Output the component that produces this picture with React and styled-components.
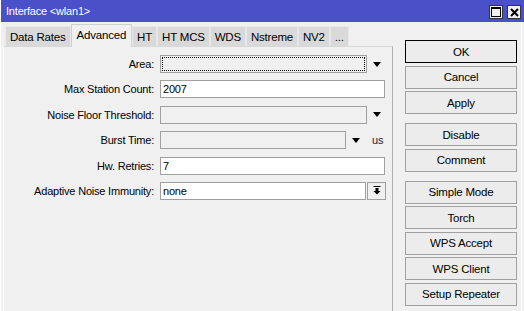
import React from 'react';
import styled, { createGlobalStyle } from 'styled-components';

const GlobalStyle = createGlobalStyle`
	html, body {
		margin: 0;
		padding: 0;
		background: #f0f0f0;
	}
	body {
		font-family: 'Liberation Sans', Arial, sans-serif;
		font-size: 11px;
		letter-spacing: -0.2px;
		color: #000;
	}
`;

const Window = styled.div`
	width: 524px;
	height: 311px;
	overflow: hidden;
	display: flex;
	flex-direction: column;
	background: #f0f0f0;
	box-sizing: border-box;
	border-left: 1px solid #fff;
`;

const TitleBar = styled.div`
	height: 22px;
	flex: none;
	background: #4a50c8;
	color: #fff;
	display: flex;
	align-items: center;
	justify-content: space-between;
	padding: 0 3px 0 5px;
	font-size: 11px;
`;

const TitleButtons = styled.div`
	display: flex;
	gap: 4px;
	padding-top: 2px;
`;

const TitleButton = styled.div`
	width: 14px;
	height: 14px;
	box-sizing: border-box;
	border: 1px solid #333;
	background: #f0f0f0;
	display: grid;
	place-items: center;
`;

const Body = styled.div`
	flex: 1;
	display: flex;
	border-right: 1px solid #fff;
	margin-right: 2px;
`;

const Main = styled.div`
	width: 390px;
	padding-left: 2px;
	display: flex;
	flex-direction: column;
`;

const Tabs = styled.div`
	height: 24px;
	display: flex;
	align-items: flex-end;
	padding-left: 2px;
`;

const Tab = styled.div`
	height: ${(p) => (p.active ? '23px' : '20px')};
	box-sizing: border-box;
	padding: 0 ${(p) => (p.active ? '5px' : '4px')};
	display: flex;
	align-items: center;
	background: ${(p) => (p.active ? '#f0f0f0' : '#d9d9d9')};
	border: 1px solid ${(p) => (p.active ? '#d0d0d0' : '#e8e8e8')};
	border-bottom: none;
	margin-bottom: ${(p) => (p.active ? '-1px' : '0')};
	position: relative;
	z-index: ${(p) => (p.active ? 1 : 0)};
	font-size: 11.5px;
	padding-bottom: ${(p) => (p.active ? '3px' : '0')};
`;

const Panel = styled.div`
	flex: 1;
	border-top: 1px solid #d8d8d8;
	border-left: 1px solid #fff;
	border-right: 1px solid #b0b0b0;
	padding-top: 8px;
	display: grid;
	grid-template-columns: 150px 1fr;
	grid-auto-rows: 18px;
	row-gap: 7.4px;
	column-gap: 6px;
	align-content: start;
`;

const Label = styled.div`
	text-align: right;
	line-height: 18px;
	white-space: nowrap;
`;

const Field = styled.div`
	display: flex;
	align-items: center;
`;

const Input = styled.div`
	width: ${(p) => p.w}px;
	height: 18px;
	box-sizing: border-box;
	border: 1px solid #a0a0a0;
	background: ${(p) => (p.disabled ? '#f0f0f0' : '#fff')};
	padding-left: 2px;
	line-height: 16px;
	outline: ${(p) => (p.focused ? '1px dotted #000' : 'none')};
	outline-offset: -3px;
`;

const Arrow = styled.div`
	width: 0;
	height: 0;
	border-left: 4px solid transparent;
	border-right: 4px solid transparent;
	border-top: 5px solid #000;
	margin-left: ${(p) => p.gap || 6}px;
`;

const Unit = styled.span`
	margin-left: 12px;
	color: #202040;
`;

const DropButton = styled.div`
	width: 19px;
	height: 18px;
	box-sizing: border-box;
	border: 1px solid #a0a0a0;
	background: #f0f0f0;
	margin-left: 1px;
	display: grid;
	place-items: center;
`;

const Side = styled.div`
	flex: 1;
	display: flex;
	flex-direction: column;
	padding: 18px 0 0 12px;
`;

const Group = styled.div`
	display: flex;
	flex-direction: column;
	gap: 2.5px;
	margin-bottom: 9px;
`;

const Button = styled.div`
	width: 112px;
	height: 23px;
	box-sizing: border-box;
	border: 1px solid ${(p) => (p.primary ? '#000' : '#a0a0a0')};
	background: #ececec;
	display: grid;
	place-items: center;
	font-size: 11.5px;
`;

const tabs = ['Data Rates', 'Advanced', 'HT', 'HT MCS', 'WDS', 'Nstreme', 'NV2', '...'];

const groups = [
	['OK', 'Cancel', 'Apply'],
	['Disable', 'Comment'],
	['Simple Mode', 'Torch', 'WPS Accept', 'WPS Client', 'Setup Repeater'],
];

const App = () => {
	return (
		<>
			<GlobalStyle />
			<Window>
				<TitleBar>
					<span>Interface &lt;wlan1&gt;</span>
					<TitleButtons>
						<TitleButton>
							<svg width="10" height="10" viewBox="0 0 10 10">
								<rect x="0.5" y="0.5" width="9" height="9" fill="none" stroke="#000" />
								<rect x="0" y="0" width="10" height="2" fill="#000" />
							</svg>
						</TitleButton>
						<TitleButton>
							<svg width="9" height="9" viewBox="0 0 9 9">
								<path d="M1 1 L8 8 M8 1 L1 8" stroke="#000" strokeWidth="2" />
							</svg>
						</TitleButton>
					</TitleButtons>
				</TitleBar>
				<Body>
					<Main>
						<Tabs>
							{tabs.map((t) => (
								<Tab key={t} active={t === 'Advanced'}>
									{t}
								</Tab>
							))}
						</Tabs>
						<Panel>
							<Label>Area:</Label>
							<Field>
								<Input w={207} disabled focused />
								<Arrow />
							</Field>

							<Label>Max Station Count:</Label>
							<Field>
								<Input w={225}>2007</Input>
							</Field>

							<Label>Noise Floor Threshold:</Label>
							<Field>
								<Input w={207} disabled />
								<Arrow />
							</Field>

							<Label>Burst Time:</Label>
							<Field>
								<Input w={186} disabled />
								<Arrow />
								<Unit>us</Unit>
							</Field>

							<Label>Hw. Retries:</Label>
							<Field>
								<Input w={225}>7</Input>
							</Field>

							<Label>Adaptive Noise Immunity:</Label>
							<Field>
								<Input w={206}>none</Input>
								<DropButton>
									<svg width="8" height="9" viewBox="0 0 8 9">
										<rect x="0.5" y="0" width="7" height="1" fill="#000" />
										<rect x="2.5" y="2" width="3" height="3" fill="#000" />
										<polygon points="0.5,5 7.5,5 4,8.5" fill="#000" />
									</svg>
								</DropButton>
							</Field>
						</Panel>
					</Main>
					<Side>
						{groups.map((g, i) => (
							<Group key={i}>
								{g.map((b) => (
									<Button key={b} primary={b === 'OK'}>
										{b}
									</Button>
								))}
							</Group>
						))}
					</Side>
				</Body>
			</Window>
		</>
	);
};

export default App;
